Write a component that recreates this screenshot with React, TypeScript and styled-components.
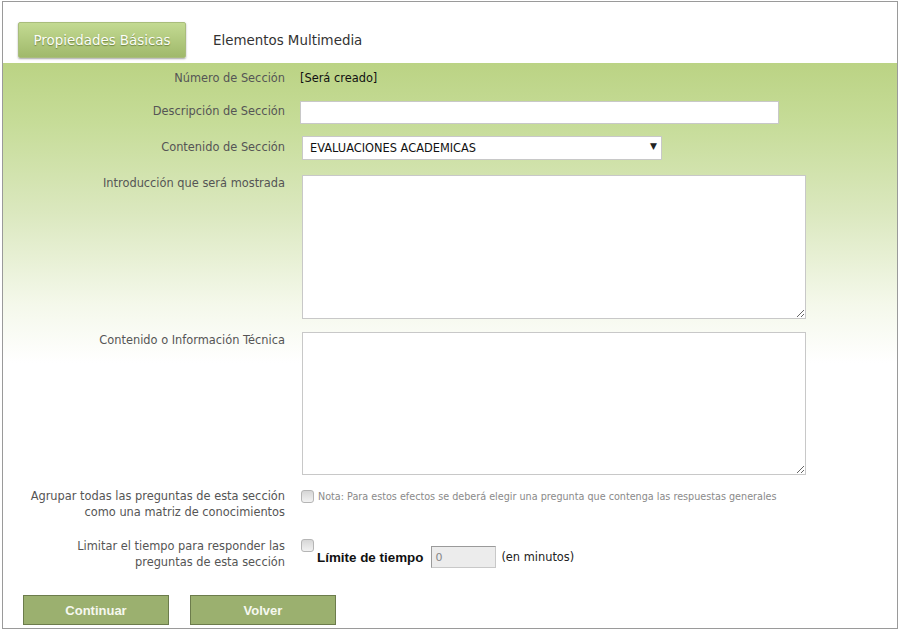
import React from "react";
import styled, { createGlobalStyle } from "styled-components";

const Global = createGlobalStyle`
  html, body { margin: 0; padding: 0; background: #fff; }
  body { font-family: "DejaVu Sans", Verdana, sans-serif; font-size: 11.4px; color: #555; }
  * { box-sizing: border-box; }
`;

const Frame = styled.div`
  margin: 1px 0 0 2px;
  width: 896px;
  height: 628px;
  border: 1px solid #9a9a9a;
  overflow: hidden;
  display: flex;
  flex-direction: column;
`;

const TabBar = styled.div`
  height: 61px;
  padding: 20px 0 0 15px;
  display: flex;
  align-items: flex-start;
  gap: 27px;
`;

const TabButton = styled.button<{ $active?: boolean }>`
  height: 36px;
  padding: 0;
  font-family: "DejaVu Sans", Verdana, sans-serif;
  font-size: 13.4px;
  cursor: pointer;
  ${(p) =>
    p.$active
      ? `
    width: 168px;
    color: #fdfef8;
    text-shadow: 0 1px 1px rgba(70,90,30,.6);
    background: linear-gradient(#c3da92, #a0b96b);
    border: 1px solid #a9bd7c;
    border-radius: 2px;
    box-shadow: 0 1px 2px rgba(0,0,0,.35);
  `
      : `
    color: #333;
    background: transparent;
    border: none;
  `}
`;

const FormArea = styled.div`
  flex: 1;
  padding-top: 7px;
  background: linear-gradient(#bbd384 0px, #c6dc98 60px, #dbe8bf 150px, #f4f8ea 240px, #fff 300px);
`;

const Row = styled.div<{ $mt?: number; $top?: boolean }>`
  display: grid;
  grid-template-columns: 282px 1fr;
  column-gap: 15px;
  margin-top: ${(p) => p.$mt ?? 0}px;
  align-items: ${(p) => (p.$top ? "start" : "center")};
`;

const Label = styled.div<{ $lift?: boolean }>`
  text-align: right;
  line-height: 16px;
  color: #555;
  padding-bottom: ${(p) => (p.$lift ? 3 : 0)}px;
`;

const Value = styled.div`
  color: #111;
  line-height: 16px;
`;

const TextInput = styled.input`
  width: 479px;
  height: 23px;
  border: 1px solid #c8c8c8;
  background: #fff;
  font-family: "DejaVu Sans", Verdana, sans-serif;
  font-size: 11px;
  padding: 2px 4px;
  outline: none;
`;

const SelectWrap = styled.div`
  position: relative;
  margin-left: 2px;
  width: 360px;
  height: 24px;
`;

const Select = styled.select`
  appearance: none;
  width: 100%;
  height: 100%;
  border: 1px solid #c8c8c8;
  background: #fff;
  border-radius: 0;
  padding: 0 0 0 7px;
  font-family: "DejaVu Sans", Verdana, sans-serif;
  font-size: 11.4px;
  color: #111;
  outline: none;
`;

const Arrow = styled.span`
  position: absolute;
  right: 5px;
  top: 5px;
  font-size: 9px;
  color: #222;
  pointer-events: none;
`;

const TextArea = styled.textarea<{ $h: number }>`
  margin-left: 2px;
  width: 504px;
  height: ${(p) => p.$h}px;
  border: 1px solid #c8c8c8;
  background: #fff;
  font-family: "DejaVu Sans", Verdana, sans-serif;
  font-size: 11px;
  outline: none;
  display: block;
`;

const Check = styled.input.attrs({ type: "checkbox" })`
  appearance: none;
  margin: 0;
  width: 13px;
  height: 13px;
  border: 1px solid #b5b5b5;
  border-radius: 3px;
  background: linear-gradient(#d6d6d6, #f2f2f2);
  flex: none;
`;

const CheckLine = styled.div`
  display: flex;
  align-items: flex-start;
  gap: 4px;
  padding-left: 1px;
  padding-top: 2px;
`;

const Note = styled.span`
  font-size: 9.65px;
  color: #8a8a8a;
  line-height: 13px;
`;

const Stack = styled.div`
  display: flex;
  flex-direction: column;
  padding-left: 1px;
  padding-top: 1px;
`;

const TimeLine = styled.div`
  display: flex;
  align-items: center;
  margin-top: -6px;
  padding-left: 16px;
  gap: 8px;
  color: #222;
`;

const Strong = styled.span`
  font-family: "Liberation Sans", Arial, sans-serif;
  font-weight: bold;
  color: #111;
  font-size: 13.4px;
`;

const SmallInput = styled.input`
  width: 65px;
  height: 22px;
  border: 1px solid #c8c8c8;
  border-top-color: #9a9a9a;
  border-left-color: #9a9a9a;
  background: #ececec;
  color: #888;
  font-family: "DejaVu Sans", Verdana, sans-serif;
  font-size: 11px;
  padding: 0 3px;
  margin-right: -3px;
`;

const Buttons = styled.div`
  display: flex;
  gap: 21px;
  padding-left: 20px;
  margin-top: 25px;
`;

const ActionButton = styled.button`
  width: 146px;
  height: 30px;
  background: #9bb06f;
  border: 1px solid #6c7c4c;
  color: #f6f8f0;
  font-family: "Liberation Sans", Arial, sans-serif;
  font-weight: bold;
  font-size: 13px;
  cursor: pointer;
`;

export default function App() {
  return (
    <>
      <Global />
      <Frame>
        <TabBar>
          <TabButton $active>Propiedades Básicas</TabButton>
          <TabButton>Elementos Multimedia</TabButton>
        </TabBar>
        <FormArea>
          <Row>
            <Label>Número de Sección</Label>
            <Value>[Será creado]</Value>
          </Row>
          <Row $mt={15}>
            <Label $lift>Descripción de Sección</Label>
            <div>
              <TextInput />
            </div>
          </Row>
          <Row $mt={12}>
            <Label $lift>Contenido de Sección</Label>
            <SelectWrap>
              <Select defaultValue="eval">
                <option value="eval">EVALUACIONES ACADEMICAS</option>
              </Select>
              <Arrow>▼</Arrow>
            </SelectWrap>
          </Row>
          <Row $mt={15} $top>
            <Label>Introducción que será mostrada</Label>
            <TextArea $h={144} />
          </Row>
          <Row $mt={13} $top>
            <Label>Contenido o Información Técnica</Label>
            <TextArea $h={143} />
          </Row>
          <Row $mt={13} $top>
            <Label>
              Agrupar todas las preguntas de esta sección
              <br />
              como una matriz de conocimientos
            </Label>
            <CheckLine>
              <Check />
              <Note>
                Nota: Para estos efectos se deberá elegir una pregunta que contenga las respuestas generales
              </Note>
            </CheckLine>
          </Row>
          <Row $mt={18} $top>
            <Label>
              Limitar el tiempo para responder las
              <br />
              preguntas de esta sección
            </Label>
            <Stack>
              <Check />
              <TimeLine>
                <Strong>Límite de tiempo</Strong>
                <SmallInput defaultValue="0" disabled />
                <span>(en minutos)</span>
              </TimeLine>
            </Stack>
          </Row>
          <Buttons>
            <ActionButton>Continuar</ActionButton>
            <ActionButton>Volver</ActionButton>
          </Buttons>
        </FormArea>
      </Frame>
    </>
  );
}
